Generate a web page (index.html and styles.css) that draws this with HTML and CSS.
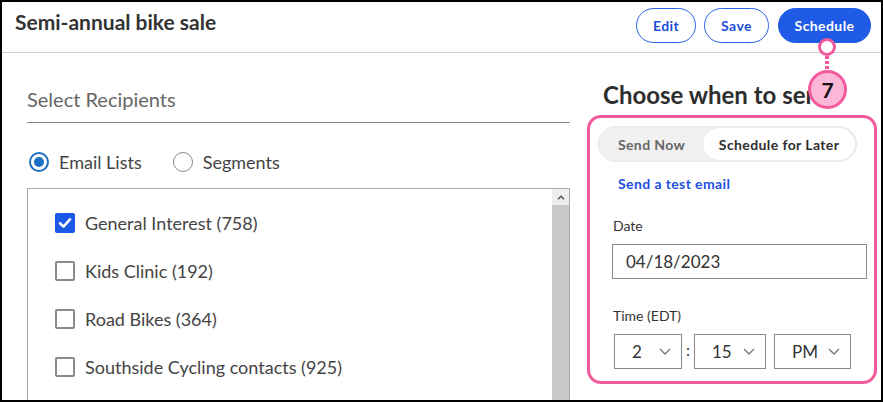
FILE: index.html
```html
<!DOCTYPE html>
<html>
<head>
<meta charset="utf-8">
<link rel="stylesheet" href="styles.css">
</head>
<body>
<div class="frame">
  <header class="topbar">
    <h1 class="title">Semi-annual bike sale</h1>
    <div class="actions">
      <button class="btn btn-outline btn-edit">Edit</button>
      <button class="btn btn-outline btn-save">Save</button>
      <button class="btn btn-primary">Schedule</button>
    </div>
  </header>
  <main class="main">
    <section class="left">
      <h2 class="section-title">Select Recipients</h2>
      <div class="radios">
        <label class="radio checked"><span class="radio-dot"></span>Email Lists</label>
        <label class="radio"><span class="radio-dot"></span>Segments</label>
      </div>
      <div class="listbox">
        <ul class="lists">
          <li class="item"><span class="cb checked"><svg viewBox="0 0 20 20" width="20" height="20"><path d="M5 10.3 L8.5 13.6 L15 6.3" fill="none" stroke="#fff" stroke-width="2.6" stroke-linecap="round" stroke-linejoin="round"/></svg></span>General Interest (758)</li>
          <li class="item"><span class="cb"></span>Kids Clinic (192)</li>
          <li class="item"><span class="cb"></span>Road Bikes (364)</li>
          <li class="item"><span class="cb"></span>Southside Cycling contacts (925)</li>
        </ul>
        <div class="scrollbar">
          <div class="scroll-btn"><svg viewBox="0 0 8 5" width="8" height="5"><path d="M1 4.2 L4 1.2 L7 4.2" fill="none" stroke="#555" stroke-width="1.5"/></svg></div>
          <div class="scroll-thumb"></div>
        </div>
      </div>
    </section>
    <section class="right">
      <h2 class="when-title">Choose when to send</h2>
      <div class="panel">
        <div class="toggle">
          <span class="seg">Send Now</span>
          <span class="seg seg-active">Schedule for Later</span>
        </div>
        <a class="test-link">Send a test email</a>
        <div class="field-label date-label">Date</div>
        <div class="input">04/18/2023</div>
        <div class="field-label time-label">Time (EDT)</div>
        <div class="time-row">
          <div class="select sel-h"><span>2</span><svg viewBox="0 0 12 7" width="12" height="7"><path d="M1 1 L6 6 L11 1" fill="none" stroke="#777" stroke-width="1.4"/></svg></div>
          <span class="colon">:</span>
          <div class="select sel-m"><span>15</span><svg viewBox="0 0 12 7" width="12" height="7"><path d="M1 1 L6 6 L11 1" fill="none" stroke="#777" stroke-width="1.4"/></svg></div>
          <div class="select sel-p"><span>PM</span><svg viewBox="0 0 12 7" width="12" height="7"><path d="M1 1 L6 6 L11 1" fill="none" stroke="#777" stroke-width="1.4"/></svg></div>
        </div>
      </div>
    </section>
  </main>
  <div class="callout">
    <span class="callout-ring"></span>
    <span class="callout-line"></span>
    <span class="callout-num">7</span>
  </div>
</div>
</body>
</html>
```

FILE: styles.css
```css
* { box-sizing: border-box; }
html, body { margin: 0; padding: 0; background: #fff; }
body { font-family: "Lato", "Liberation Sans", sans-serif; }
.frame {
  position: relative;
  width: 883px;
  height: 402px;
  border: 2px solid #000;
  overflow: hidden;
  background: #fff;
}
.topbar {
  height: 51px;
  border-bottom: 1px solid #cfcfcf;
  display: flex;
  align-items: flex-start;
  justify-content: space-between;
  padding: 0 10px 0 13px;
}
.title {
  margin: 7px 0 0 0;
  font-size: 21px;
  line-height: 26px;
  font-weight: 700;
  color: #333;
}
.actions { display: flex; gap: 8px; margin-top: 6px; }
.btn {
  height: 35px;
  border-radius: 18px;
  font-family: "Lato", "Liberation Sans", sans-serif;
  font-weight: 700;
  font-size: 14px;
  letter-spacing: 0.4px;
  padding: 0;
  cursor: pointer;
}
.btn-outline { background: #fff; color: #1d4fd8; border: 1px solid #2b5fe6; }
.btn-edit { width: 60px; }
.btn-save { width: 65px; }
.btn-primary { width: 93px; background: #1f5be6; color: #fff; border: 1px solid #1f5be6; margin-left: 1px; }

.main { display: flex; gap: 17px; padding-left: 25px; }
.left { width: 543px; padding-top: 33px; }
.section-title {
  margin: 0;
  font-size: 20px;
  line-height: 26px;
  font-weight: 400;
  color: #666;
  padding-bottom: 10px;
  border-bottom: 1px solid #8a8a8a;
}
.radios { display: flex; gap: 31px; margin-top: 27px; height: 24px; align-items: center; padding-left: 2px; }
.radio { display: flex; align-items: center; font-size: 18px; color: #444; gap: 10px; }
.radio-dot {
  width: 20px; height: 20px; border-radius: 50%;
  border: 1.5px solid #8a8a8a; display: inline-block; position: relative;
}
.radio.checked .radio-dot { border: 2.5px solid #1a6fc4; }
.radio.checked .radio-dot::after {
  content: ""; position: absolute; left: 2.5px; top: 2.5px; width: 10px; height: 10px;
  border-radius: 50%; background: #1a6fc4;
}
.listbox {
  margin-top: 14px;
  height: 240px;
  border: 1px solid #aaa;
  display: flex;
}
.lists { list-style: none; margin: 0; padding: 10px 0 0 27px; flex: 1; }
.item { height: 48px; display: flex; align-items: center; gap: 10px; font-size: 18px; color: #444; }
.cb {
  width: 20px; height: 20px; border: 2px solid #8a8a8a; border-radius: 2px; display: inline-block;
}
.cb.checked { border: none; background: #1c58e6; }
.cb svg { display: block; }
.scrollbar { width: 17px; display: flex; flex-direction: column; }
.scroll-btn { height: 16px; background: #eee; display: flex; align-items: center; justify-content: center; }
.scroll-thumb { flex: 1; background: #c9c9c9; }

.right { width: 290px; padding-top: 27px; }
.when-title {
  margin: 0;
  width: 250px;
  overflow: hidden;
  white-space: nowrap;
  font-size: 24px;
  line-height: 30px;
  font-weight: 700;
  color: #2e2e2e;
  padding-left: 16px;
}
.panel {
  margin-top: 5px;
  border: 3px solid #f25a9d;
  border-radius: 14px;
  padding: 8px 7px 12px 8px;
}
.toggle {
  width: 259px; height: 36px; border-radius: 18px;
  background: #f0f0f0; border: 1px solid #e8e8e8;
  display: flex; align-items: center; padding: 1px;
}
.seg { font-size: 14px; font-weight: 700; letter-spacing: 0.4px; color: #666; height: 100%; display: flex; align-items: center; justify-content: center; }
.seg:first-child { width: 104px; }
.seg-active { width: 153px; background: #fff; border-radius: 17px; color: #2e2e2e; box-shadow: 0 0 1px rgba(0,0,0,0.15); }
.test-link {
  display: block; margin-top: 12px; padding-left: 20px;
  font-size: 14px; line-height: 20px; font-weight: 700; letter-spacing: 0.4px; color: #1d4fe0;
}
.field-label { font-size: 14px; line-height: 20px; color: #333; padding-left: 15px; }
.date-label { margin-top: 22px; }
.input {
  margin: 8px 0 0 14px; width: 255px; height: 35px; border: 1px solid #8a8a8a;
  font-size: 17px; color: #333; padding-left: 13px; display: flex; align-items: center;
}
.time-label { margin-top: 27px; }
.time-row { display: flex; align-items: center; margin-top: 8px; padding-left: 16px; }
.select {
  height: 35px; border: 1px solid #8a8a8a; display: flex; align-items: center;
  justify-content: space-between; font-size: 17px; color: #333; padding: 0 10px 0 17px;
}
.select svg { display: block; }
.sel-h { width: 68px; }
.sel-m { width: 72px; }
.sel-p { width: 77px; margin-left: 8px; }
.colon { width: 12px; text-align: center; font-size: 16px; color: #333; margin-top: -4px; }

.callout { position: absolute; left: 806px; top: 36px; width: 40px; height: 72px; }
.callout-ring {
  position: absolute; left: 10px; top: 0; width: 18px; height: 18px; border-radius: 50%;
  border: 3px solid #f25a9d; background: #fff;
}
.callout-line {
  position: absolute; left: 17px; top: 18px; width: 4px; height: 14px;
  background: repeating-linear-gradient(to bottom, #f25a9d 0 3px, transparent 3px 5px);
}
.callout-num {
  position: absolute; left: 0; top: 32px; width: 39px; height: 39px; border-radius: 50%;
  border: 3px solid #f25a9d; background: #fbb7d5;
  display: flex; align-items: center; justify-content: center;
  font-size: 21px; font-weight: 700; color: #111;
}
```
